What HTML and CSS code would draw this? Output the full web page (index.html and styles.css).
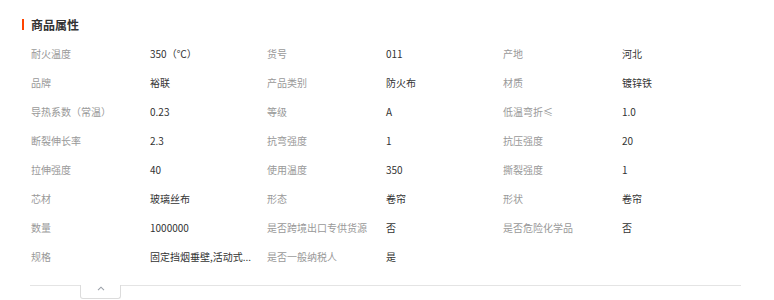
FILE: index.html
```html
<!DOCTYPE html>
<html lang="zh-CN">
<head>
<meta charset="utf-8">
<title>商品属性</title>
<link rel="stylesheet" href="styles.css">
</head>
<body>
<section class="attrs">
  <h2 class="attrs-title">商品属性</h2>
  <div class="attrs-grid">
    <div class="k">耐火温度</div><div class="v">350（℃）</div>
    <div class="k">货号</div><div class="v">011</div>
    <div class="k">产地</div><div class="v">河北</div>

    <div class="k">品牌</div><div class="v">裕联</div>
    <div class="k">产品类别</div><div class="v">防火布</div>
    <div class="k">材质</div><div class="v">镀锌铁</div>

    <div class="k">导热系数（常温）</div><div class="v">0.23</div>
    <div class="k">等级</div><div class="v">A</div>
    <div class="k">低温弯折≤</div><div class="v">1.0</div>

    <div class="k">断裂伸长率</div><div class="v">2.3</div>
    <div class="k">抗弯强度</div><div class="v">1</div>
    <div class="k">抗压强度</div><div class="v">20</div>

    <div class="k">拉伸强度</div><div class="v">40</div>
    <div class="k">使用温度</div><div class="v">350</div>
    <div class="k">撕裂强度</div><div class="v">1</div>

    <div class="k">芯材</div><div class="v">玻璃丝布</div>
    <div class="k">形态</div><div class="v">卷帘</div>
    <div class="k">形状</div><div class="v">卷帘</div>

    <div class="k">数量</div><div class="v">1000000</div>
    <div class="k">是否跨境出口专供货源</div><div class="v">否</div>
    <div class="k">是否危险化学品</div><div class="v">否</div>

    <div class="k">规格</div><div class="v">固定挡烟垂壁,活动式...</div>
    <div class="k">是否一般纳税人</div><div class="v">是</div>
    <div class="k"></div><div class="v"></div>
  </div>
  <div class="attrs-foot">
    <span class="foot-line foot-left"></span>
    <button class="toggle" type="button" aria-label="收起">
      <svg width="8" height="5" viewBox="0 0 8 5"><path d="M1 4.2 L4 1.2 L7 4.2" fill="none" stroke="#9aa0a8" stroke-width="1.1"/></svg>
    </button>
    <span class="foot-line foot-right"></span>
  </div>
</section>
</body>
</html>
```

FILE: styles.css
```css
html, body {
  margin: 0;
  padding: 0;
  background: #fff;
}
body {
  width: 774px;
  height: 300px;
  overflow: hidden;
  font-family: "Noto Sans CJK SC", "Microsoft YaHei", sans-serif;
}
.attrs {
  padding: 19px 0 0 22px;
}
.attrs-title {
  margin: 0;
  height: 11px;
  line-height: 11px;
  border-left: 2px solid #ff4400;
  padding-left: 7px;
  font-size: 12px;
  font-weight: bold;
  color: #333;
}
.attrs-grid {
  display: grid;
  grid-template-columns: repeat(3, 119px 117px);
  grid-auto-rows: 29px;
  margin: 9px 0 0 9px;
  font-size: 10px;
}
.k, .v {
  display: flex;
  align-items: center;
  white-space: nowrap;
}
.k {
  color: #999;
}
.v {
  color: #333;
}
.attrs-foot {
  display: flex;
  align-items: flex-start;
  margin: 14px 0 0 8px;
  width: 711px;
  height: 15px;
}
.foot-line {
  border-top: 1px solid #e4e4e4;
}
.foot-left {
  width: 50px;
}
.foot-right {
  flex: 1;
}
.toggle {
  display: flex;
  align-items: center;
  justify-content: center;
  box-sizing: border-box;
  width: 41px;
  height: 14px;
  margin: 0;
  padding: 0 0 6px;
  background: #fff;
  border: 1px solid #dcdcdc;
  border-top: none;
  border-radius: 0 0 3px 3px;
}
```
